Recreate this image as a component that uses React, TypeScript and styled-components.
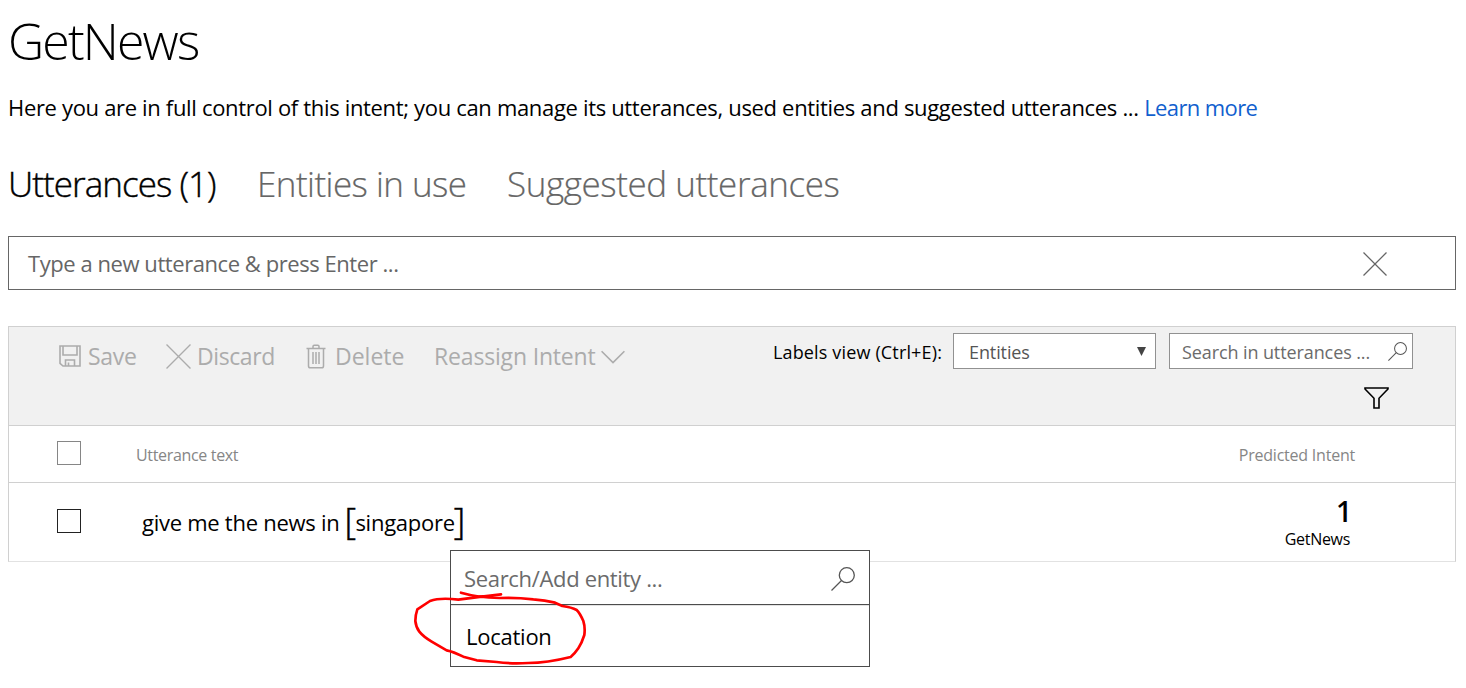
import React from 'react';
import styled, { createGlobalStyle } from 'styled-components';

const GlobalStyle = createGlobalStyle`
  *, *::before, *::after { box-sizing: border-box; }
  body {
    margin: 0;
    background: #fff;
    color: #000;
    font-family: "Open Sans", "Noto Sans", sans-serif;
  }
`;

const Page = styled.main`
  width: 1466px;
  height: 688px;
  padding: 11px 10px 0 8px;
  overflow: hidden;
  white-space: nowrap;
`;

const Title = styled.h1`
  margin: 0;
  font-size: 50px;
  font-weight: 300;
  line-height: 60px;
  letter-spacing: -1.85px;
`;

const Description = styled.p`
  margin: 21px 0 0;
  font-size: 22px;
  line-height: 31px;
  letter-spacing: -0.33px;
`;

const LearnMore = styled.a`
  color: #1160ce;
  letter-spacing: -0.6px;
  text-decoration: none;
`;

const Tabs = styled.nav`
  display: flex;
  margin-top: 37px;
`;

const Tab = styled.a<{ $active?: boolean; $width: number; $spacing: number }>`
  width: ${(p) => p.$width}px;
  color: ${(p) => (p.$active ? '#000' : '#666')};
  font-size: 35px;
  font-weight: 300;
  line-height: 48px;
  letter-spacing: ${(p) => p.$spacing}px;
  -webkit-text-stroke: ${(p) => (p.$active ? '0.4px' : '0.2px')} currentColor;
`;

const NewUtterance = styled.div`
  display: flex;
  align-items: center;
  justify-content: space-between;
  height: 54px;
  margin-top: 28px;
  padding: 0 68px 1px 19px;
  border: 1px solid #666;
  color: #666;
  font-size: 22px;
  letter-spacing: -0.44px;

  svg { position: relative; top: 1px; }
`;

const Table = styled.section`
  margin-top: 36px;
  border: 1px solid #d0d0d0;
  border-bottom-color: #e2e2e2;
`;

const Toolbar = styled.div`
  display: flex;
  justify-content: space-between;
  height: 99px;
  padding: 6px 42px 0 50px;
  border-bottom: 1px solid #d0d0d0;
  background: #f1f1f1;
`;

const Actions = styled.div`
  display: flex;
  height: 46px;
  align-items: center;
`;

const Action = styled.div<{ $width: number; $gap: number; $spacing?: number }>`
  display: flex;
  align-items: center;
  gap: ${(p) => p.$gap}px;
  width: ${(p) => p.$width}px;
  color: #acacac;
  font-size: 23px;
  line-height: 30px;
  letter-spacing: ${(p) => p.$spacing ?? 0}px;

  svg { flex: none; }
`;

const Tools = styled.div`
  display: flex;
  flex-direction: column;
  align-items: flex-end;
`;

const Filters = styled.div`
  display: flex;
  align-items: center;
  height: 36px;
  font-size: 18px;
`;

const ViewLabel = styled.label`
  width: 180px;
  padding-top: 2px;
  letter-spacing: 0.15px;
`;

const Field = styled.div<{ $width: number; $pad: string }>`
  display: flex;
  align-items: center;
  justify-content: space-between;
  width: ${(p) => p.$width}px;
  height: 36px;
  padding: ${(p) => p.$pad};
  border: 1px solid #919191;
  background: #fff;
  color: #555;
  letter-spacing: -0.1px;

  svg { position: relative; top: -1px; }

  & + & { margin-left: 13px; color: #6b6b6b; }
`;

const FilterButton = styled.div`
  display: flex;
  margin: 18px 24px 0 0;
`;

const Row = styled.div<{ $height: number; $divider?: boolean }>`
  display: flex;
  height: ${(p) => p.$height}px;
  padding: 0 100px 0 48px;
  border-bottom: ${(p) => (p.$divider ? '1px solid #d0d0d0' : 'none')};
`;

const Checkbox = styled.span<{ $top: number; $color: string }>`
  flex: none;
  width: 24px;
  height: 24px;
  margin-top: ${(p) => p.$top}px;
  border: 1px solid ${(p) => p.$color};
`;

const HeadCell = styled.span`
  flex: 1;
  margin-left: 55px;
  color: #868686;
  font-size: 16px;
  line-height: 58px;
  letter-spacing: -0.33px;

  & + & { flex: none; margin-left: 0; letter-spacing: -0.22px; }
`;

const Utterance = styled.span`
  display: flex;
  flex: 1;
  margin-left: 61px;
  font-size: 22px;
  line-height: 79px;
  letter-spacing: -0.27px;
`;

const Word = styled.span`
  display: flex;
  margin-left: 5px;
`;

const Bracket = styled.span`
  width: 11px;
  font-size: 36px;
  font-weight: 300;
  line-height: 75px;
  -webkit-text-stroke: 0.5px currentColor;

  &:last-child { margin-left: -1px; }
`;

const Prediction = styled.div`
  display: flex;
  flex-direction: column;
  align-items: flex-end;
  padding: 11px 5px 0 0;
`;

const Score = styled.span`
  margin-right: -2px;
  font-size: 28px;
  font-weight: 600;
  line-height: 34px;
`;

const IntentName = styled.span`
  font-size: 16px;
  line-height: 22px;
  letter-spacing: -0.3px;
`;

const EntityMenu = styled.div`
  position: absolute;
  top: 550px;
  left: 450px;
  width: 420px;
  height: 117px;
  border: 1px solid #4c4c4c;
  background: #fff;
  font-size: 22px;
`;

const EntitySearch = styled.div`
  display: flex;
  align-items: center;
  justify-content: space-between;
  height: 54px;
  padding: 0 14px 0 13px;
  border-bottom: 1px solid #4c4c4c;
  box-shadow: 0 1px 0 #e2e2e2;
  color: #6b6b6b;
  letter-spacing: -0.33px;

  svg { position: relative; top: 1px; }
`;

const EntityOption = styled.div`
  padding-left: 15px;
  line-height: 63px;
  letter-spacing: -0.25px;
`;

const Annotation = styled.svg`
  position: absolute;
  top: 540px;
  left: 400px;
`;

const SaveIcon = () => (
  <svg width="22" height="22" viewBox="0 0 22 22" fill="none" stroke="currentColor" strokeWidth="1.6">
    <path d="M1 1H21V21H4L1 18.3Z" />
    <path d="M4 1V10H18V1M6.500 21V15H15.500V21M9.500 21V17.500" />
  </svg>
);

const CrossIcon = ({ size }: { size: number }) => (
  <svg width={size} height={size} viewBox="0 0 24 24" fill="none" stroke="currentColor" strokeWidth="1.3">
    <path d="M.5.5 23.500 23.500M23.500.5.5 23.500" />
  </svg>
);

const TrashIcon = () => (
  <svg width="20" height="25" viewBox="0 0 20 25" fill="none" stroke="currentColor" strokeWidth="1.5">
    <path d="M.5 4.500H19.500M7 4.500V2.500Q7 1.200 8.200 1.200H11.800Q13 1.200 13 2.500V4.500" />
    <path d="M2.500 4.500V22Q2.500 23.800 4.200 23.800H15.800Q17.500 23.800 17.500 22V4.500" />
    <path d="M7 8V20M10 8V20M13 8V20" />
  </svg>
);

const ChevronIcon = () => (
  <svg width="24" height="16" viewBox="0 0 24 16" fill="none" stroke="currentColor" strokeWidth="1.6">
    <path d="M.6 3.200 12 14.600 23.400 3.200" />
  </svg>
);

const SearchIcon = ({ size }: { size: number }) => (
  <svg width={size} height={size} viewBox="0 0 24 24" fill="none" stroke="#555" strokeWidth="1.3">
    <circle cx="15.800" cy="8.200" r="7.500" />
    <path d="M10.500 13.500.5 23.500" />
  </svg>
);

const ArrowIcon = () => (
  <svg width="9" height="9" viewBox="0 0 9 9" fill="#444">
    <path d="M0 0H9L4.500 9Z" />
  </svg>
);

const FunnelIcon = () => (
  <svg width="25" height="22" viewBox="0 0 25 22" fill="none" stroke="#000" strokeWidth="1.6">
    <path d="M1 1H24V2L15 11.300V21H10V11.300L1 2Z" />
  </svg>
);

export default function App() {
  return (
    <Page>
      <GlobalStyle />
      <Title>GetNews</Title>
      <Description>
        Here you are in full control of this intent; you can manage its utterances, used entities and suggested
        utterances ... <LearnMore>Learn more</LearnMore>
      </Description>
      <Tabs>
        <Tab $active $width={249} $spacing={-0.95}>Utterances (1)</Tab>
        <Tab $width={250} $spacing={-0.55}>Entities in use</Tab>
        <Tab $width={340} $spacing={-0.42}>Suggested utterances</Tab>
      </Tabs>

      <NewUtterance>
        <span>Type a new utterance &amp; press Enter ...</span>
        <CrossIcon size={24} />
      </NewUtterance>

      <Table>
        <Toolbar>
          <Actions>
            <Action $width={107} $gap={7} $spacing={-0.3}><SaveIcon />Save</Action>
            <Action $width={140} $gap={6} $spacing={-0.4}><CrossIcon size={25} />Discard</Action>
            <Action $width={128} $gap={9}><TrashIcon />Delete</Action>
            <Action $width={194} $gap={5} $spacing={-0.17}>Reassign Intent<ChevronIcon /></Action>
          </Actions>
          <Tools>
            <Filters>
              <ViewLabel>Labels view (Ctrl+E):</ViewLabel>
              <Field $width={203} $pad="2px 9px 0 15px">Entities<ArrowIcon /></Field>
              <Field $width={244} $pad="2px 5px 0 12px">Search in utterances ...<SearchIcon size={19} /></Field>
            </Filters>
            <FilterButton><FunnelIcon /></FilterButton>
          </Tools>
        </Toolbar>

        <Row $height={57} $divider>
          <Checkbox $top={15} $color="#868686" />
          <HeadCell>Utterance text</HeadCell>
          <HeadCell>Predicted Intent</HeadCell>
        </Row>
        <Row $height={78}>
          <Checkbox $top={26} $color="#222" />
          <Utterance>
            give me the news in
            <Word><Bracket>[</Bracket>singapore<Bracket>]</Bracket></Word>
          </Utterance>
          <Prediction>
            <Score>1</Score>
            <IntentName>GetNews</IntentName>
          </Prediction>
        </Row>
      </Table>

      <EntityMenu>
        <EntitySearch>
          Search/Add entity ...
          <SearchIcon size={24} />
        </EntitySearch>
        <EntityOption>Location</EntityOption>
      </EntityMenu>

      <Annotation width="200" height="140" viewBox="0 0 600 420" fill="none" stroke="#f00" strokeWidth="8" strokeLinejoin="round" strokeLinecap="round">
        <path d="M303 163Q240 170 175 179Q120 172 90 183L52 208Q46 225 46 243Q48 262 58 275Q70 290 95 305L140 331Q160 335 190 350L230 361L290 366Q330 372 385 369Q440 369 512 351Q525 340 535 325Q545 310 553 285Q556 262 550 243Q540 220 530 210Q515 202 487 198L465 188Q435 181 400 178Q350 172 300 174Q230 172 183 158" />
      </Annotation>
    </Page>
  );
}
